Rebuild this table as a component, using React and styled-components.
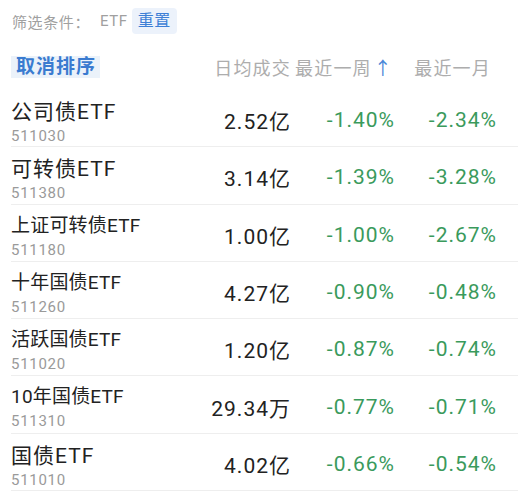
import React from "react";
import styled, { createGlobalStyle } from "styled-components";

const Global = createGlobalStyle`
  body {
    margin: 0;
    background: #fff;
    font-family: Roboto, "Noto Sans CJK SC", sans-serif;
  }
`;

const Page = styled.div`
  width: 525px;
  height: 497px;
  overflow: hidden;
  background: #fff;
`;

const FilterBar = styled.div`
  display: flex;
  align-items: center;
  height: 26px;
  padding: 8px 0 0 12px;
  font-size: 15px;
  letter-spacing: 0.6px;
  color: #a0a0a0;
`;

const FilterValue = styled.span`
  margin-left: 10px;
`;

const Tag = styled.span`
  margin-left: 4px;
  padding: 0 6px;
  height: 26px;
  line-height: 26px;
  border-radius: 4px;
  background: #ecf2fb;
  color: #3d7fd6;
  font-size: 16px;
`;

const Grid = styled.div`
  display: grid;
  grid-template-columns: 170px 110px 104px 102px;
  align-items: center;
  padding-right: 21px;
`;

const Header = styled(Grid)`
  margin: 0 7px 0 11px;
  height: 46px;
  padding-top: 10px;
`;

const SortButton = styled.span`
  justify-self: start;
  padding: 0 4px 0 5px;
  height: 22px;
  line-height: 22px;
  background: #ebf2fa;
  color: #3a7bd0;
  font-size: 19px;
  letter-spacing: 1px;
  font-weight: 700;
`;

const HeadCell = styled.span`
  justify-self: end;
  font-size: 18px;
  letter-spacing: 1.2px;
  color: #adadad;
  white-space: nowrap;
  margin-right: ${(p) => p.$shift || 0}px;
`;

const Arrow = styled.span`
  color: #4a86d8;
  margin-left: 2px;
`;

const List = styled.div`
  margin: 0 7px 0 11px;
`;

const Row = styled(Grid)`
  height: 56.3px;
  border-bottom: 1px solid #eeeeee;
`;

const NameCell = styled.div`
  align-self: start;
  display: flex;
  flex-direction: column;
  padding-top: ${(p) => (p.$wide ? 8 : 7)}px;
`;

const Name = styled.span`
  font-size: ${(p) => (p.$wide ? 21 : 19)}px;
  letter-spacing: ${(p) => (p.$wide ? 1 : 0.2)}px;
  line-height: 28px;
  color: #222;
  white-space: nowrap;
`;

const Code = styled.span`
  font-size: 15px;
  line-height: 20px;
  letter-spacing: 0.7px;
  color: #9a9a9a;
`;

const Value = styled.span`
  justify-self: end;
  font-size: 21px;
  letter-spacing: 1px;
  padding-top: 4px;
  color: ${(p) => (p.$green ? "#3a9a5c" : "#222")};
  white-space: nowrap;
`;

const rows = [
  ["公司债ETF", "511030", "2.52亿", "-1.40%", "-2.34%", true],
  ["可转债ETF", "511380", "3.14亿", "-1.39%", "-3.28%", true],
  ["上证可转债ETF", "511180", "1.00亿", "-1.00%", "-2.67%", false],
  ["十年国债ETF", "511260", "4.27亿", "-0.90%", "-0.48%", false],
  ["活跃国债ETF", "511020", "1.20亿", "-0.87%", "-0.74%", false],
  ["10年国债ETF", "511310", "29.34万", "-0.77%", "-0.71%", false],
  ["国债ETF", "511010", "4.02亿", "-0.66%", "-0.54%", true],
];

export default function App() {
  return (
    <Page>
      <Global />
      <FilterBar>
        筛选条件：<FilterValue>ETF</FilterValue>
        <Tag>重置</Tag>
      </FilterBar>
      <Header>
        <SortButton>取消排序</SortButton>
        <HeadCell $shift={0}>日均成交</HeadCell>
        <HeadCell $shift={2}>
          最近一周<Arrow>↑</Arrow>
        </HeadCell>
        <HeadCell $shift={6}>最近一月</HeadCell>
      </Header>
      <List>
        {rows.map(([name, code, vol, week, month, wide]) => (
          <Row key={code}>
            <NameCell $wide={wide}>
              <Name $wide={wide}>{name}</Name>
              <Code>{code}</Code>
            </NameCell>
            <Value>{vol}</Value>
            <Value $green>{week}</Value>
            <Value $green>{month}</Value>
          </Row>
        ))}
      </List>
    </Page>
  );
}
